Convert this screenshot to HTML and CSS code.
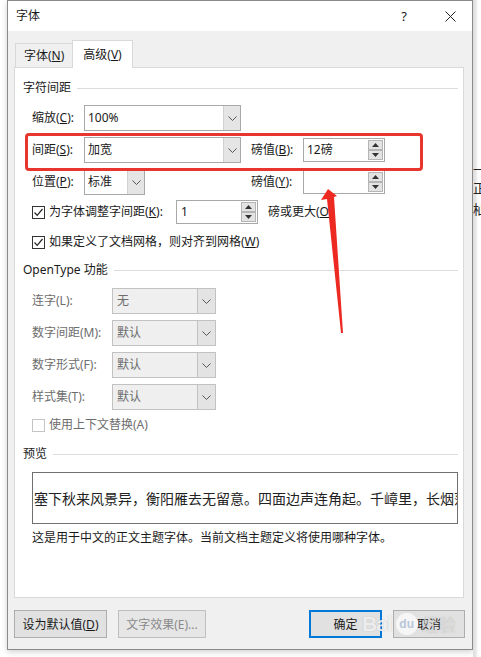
FILE: index.html
```html
<!DOCTYPE html>
<html lang="zh-CN">
<head>
<meta charset="utf-8">
<title>字体</title>
<link rel="stylesheet" href="styles.css">
</head>
<body>
<div class="screen">
  <div class="dialog">
    <div class="titlebar">
      <span class="title">字体</span>
      <span class="help">?</span>
      <span class="close"><svg width="11" height="11" viewBox="0 0 11 11"><path d="M0.5 0.5L10.5 10.5M10.5 0.5L0.5 10.5" stroke="#222" stroke-width="1" fill="none"/></svg></span>
    </div>
    <div class="body">
      <div class="tabs">
        <div class="tab">字体(<u>N</u>)</div>
        <div class="tab active">高级(<u>V</u>)</div>
      </div>
      <div class="panel">
        <div class="group g1"><span>字符间距</span></div>

        <div class="row r1">
          <span class="lbl">缩放(<u>C</u>):</span>
          <div class="combo"><span class="val">100%</span><span class="btn"><svg width="9" height="5" viewBox="0 0 9 5"><polyline points="0.5,0.5 4.5,4.5 8.5,0.5" fill="none" stroke="#555" stroke-width="1"/></svg></span></div>
        </div>

        <div class="row r2">
          <span class="lbl">间距(<u>S</u>):</span>
          <div class="combo"><span class="val">加宽</span><span class="btn"><svg width="9" height="5" viewBox="0 0 9 5"><polyline points="0.5,0.5 4.5,4.5 8.5,0.5" fill="none" stroke="#555" stroke-width="1"/></svg></span></div>
          <span></span>
          <span class="lbl">磅值(<u>B</u>):</span>
          <div class="spin"><span class="val">12磅</span><span class="arrows"><span><svg width="7" height="4" viewBox="0 0 7 4"><polygon points="3.5,0 7,4 0,4" fill="#333"/></svg></span><span><svg width="7" height="4" viewBox="0 0 7 4"><polygon points="0,0 7,0 3.5,4" fill="#333"/></svg></span></span></div>
        </div>

        <div class="row r3">
          <span class="lbl">位置(<u>P</u>):</span>
          <div class="combo short"><span class="val">标准</span><span class="btn"><svg width="9" height="5" viewBox="0 0 9 5"><polyline points="0.5,0.5 4.5,4.5 8.5,0.5" fill="none" stroke="#555" stroke-width="1"/></svg></span></div>
          <span></span>
          <span class="lbl">磅值(<u>Y</u>):</span>
          <div class="spin"><span class="val"></span><span class="arrows"><span><svg width="7" height="4" viewBox="0 0 7 4"><polygon points="3.5,0 7,4 0,4" fill="#333"/></svg></span><span><svg width="7" height="4" viewBox="0 0 7 4"><polygon points="0,0 7,0 3.5,4" fill="#333"/></svg></span></span></div>
        </div>

        <div class="checkrow c1">
          <span class="check"><svg width="11" height="11" viewBox="0 0 11 11"><polyline points="1.5,5.5 4.2,8.3 9.5,2" fill="none" stroke="#222" stroke-width="1.2"/></svg></span>
          <span class="ctext kern">为字体调整字间距(<u>K</u>):</span>
          <div class="spin"><span class="val v1">1</span><span class="arrows"><span><svg width="7" height="4" viewBox="0 0 7 4"><polygon points="3.5,0 7,4 0,4" fill="#333"/></svg></span><span><svg width="7" height="4" viewBox="0 0 7 4"><polygon points="0,0 7,0 3.5,4" fill="#333"/></svg></span></span></div>
          <span class="after">磅或更大(<u>O</u>)</span>
        </div>

        <div class="checkrow c2">
          <span class="check"><svg width="11" height="11" viewBox="0 0 11 11"><polyline points="1.5,5.5 4.2,8.3 9.5,2" fill="none" stroke="#222" stroke-width="1.2"/></svg></span>
          <span class="ctext">如果定义了文档网格，则对齐到网格(<u>W</u>)</span>
        </div>

        <div class="group g2"><span>OpenType 功能</span></div>

        <div class="otrow o1">
          <span class="lbl">连字(L):</span>
          <div class="combo dis"><span class="val">无</span><span class="btn"><svg width="9" height="5" viewBox="0 0 9 5"><polyline points="0.5,0.5 4.5,4.5 8.5,0.5" fill="none" stroke="#555" stroke-width="1"/></svg></span></div>
        </div>
        <div class="otrow">
          <span class="lbl">数字间距(M):</span>
          <div class="combo dis"><span class="val">默认</span><span class="btn"><svg width="9" height="5" viewBox="0 0 9 5"><polyline points="0.5,0.5 4.5,4.5 8.5,0.5" fill="none" stroke="#555" stroke-width="1"/></svg></span></div>
        </div>
        <div class="otrow">
          <span class="lbl">数字形式(F):</span>
          <div class="combo dis"><span class="val">默认</span><span class="btn"><svg width="9" height="5" viewBox="0 0 9 5"><polyline points="0.5,0.5 4.5,4.5 8.5,0.5" fill="none" stroke="#555" stroke-width="1"/></svg></span></div>
        </div>
        <div class="otrow">
          <span class="lbl">样式集(T):</span>
          <div class="combo dis"><span class="val">默认</span><span class="btn"><svg width="9" height="5" viewBox="0 0 9 5"><polyline points="0.5,0.5 4.5,4.5 8.5,0.5" fill="none" stroke="#555" stroke-width="1"/></svg></span></div>
        </div>

        <div class="checkrow c3">
          <span class="check off"></span>
          <span class="ctext grey">使用上下文替换(A)</span>
        </div>

        <div class="group g3"><span>预览</span></div>
        <div class="preview"><span>塞下秋来风景异，衡阳雁去无留意。四面边声连角起。千嶂里，长烟落日孤城闭。</span></div>
        <div class="desc">这是用于中文的正文主题字体。当前文档主题定义将使用哪种字体。</div>
      </div>

      <div class="buttons">
        <span class="b b1">设为默认值(<u>D</u>)</span>
        <span class="b b2">文字效果(E)...</span>
        <span class="b b3">确定</span>
        <span class="b b4">取消</span>
      </div>
    </div>
  </div>
  <div class="behind">
    <span class="f1">一</span>
    <span class="f2">正</span>
    <span class="f3">杣</span>
  </div>
</div>

<div class="redbox"></div>
<svg class="arrow" width="481" height="657" viewBox="0 0 481 657">
  <polygon points="328,189 337,196 334,197 343,333 341,333 327,199 321,200" fill="#ec2a22"/>
</svg>
<div class="watermark"><span class="wm-bai">Bai</span><span class="wm-du">du</span><span class="wm-jy">经验</span></div>
</body>
</html>
```
FILE: styles.css
```css
* { box-sizing: border-box; }
html, body { margin: 0; padding: 0; }
body {
  width: 481px;
  height: 657px;
  overflow: hidden;
  position: relative;
  background: #fff;
  font-family: "Noto Sans", "Noto Sans CJK SC", sans-serif;
  font-size: 12px;
  color: #1a1a1a;
}
u { text-decoration: underline; text-underline-offset: 1px; }

.screen { display: flex; height: 657px; }

.dialog {
  flex: none;
  margin-left: 7px;
  width: 466px;
  height: 650px;
  border: 1px solid #8a8a8a;
  background: #f0f0f0;
  box-shadow: 0 2px 6px rgba(0,0,0,0.18);
  display: flex;
  flex-direction: column;
}

.titlebar {
  height: 30px;
  flex: none;
  background: #fff;
  display: flex;
  align-items: center;
  padding-left: 8px;
  padding-right: 16px;
}
.title { flex: 1; font-size: 12px; line-height: 16px; }
.help { font-size: 13px; line-height: 16px; margin-right: 38px; }
.close { width: 11px; height: 11px; display: flex; }

.body { flex: 1; padding-top: 9px; display: flex; flex-direction: column; }

.tabs { display: flex; align-items: flex-end; height: 27px; margin-left: 7px; flex: none; }
.tab {
  height: 24px;
  width: 57px;
  border: 1px solid #d9d9d9;
  border-bottom: none;
  border-right: none;
  padding-left: 8px;
  line-height: 24px;
}
.tab.active {
  height: 28px;
  width: 61px;
  background: #fff;
  border-right: 1px solid #d9d9d9;
  padding-left: 0;
  text-align: center;
  line-height: 28px;
  margin-bottom: -1px;
  position: relative;
  z-index: 1;
}

.panel {
  flex: none;
  margin-left: 6px;
  width: 450px;
  height: 531px;
  background: #fff;
  border: 1px solid #d9d9d9;
  padding: 0 5px 0 8px;
}

.group { display: flex; align-items: center; height: 16px; line-height: 16px; }
.group::after { content: ""; flex: 1; height: 1px; background: #dcdcdc; margin-left: 6px; }
.g1 { margin-top: 12px; }
.g2 { margin-top: 10px; }
.g3 { margin-top: 12px; }

.lbl { line-height: 16px; white-space: nowrap; }

.row {
  display: grid;
  grid-template-columns: 52px 157px 10px 52px 82px;
  align-items: center;
  height: 26px;
  margin-left: 9px;
  margin-top: 6px;
}
.row.r1 { margin-top: 9px; }

.combo {
  height: 26px;
  border: 1px solid #a8a8a8;
  background: #fff;
  display: flex;
}
.combo.short { width: 61px; }
.combo .val { flex: 1; padding-left: 3px; line-height: 24px; white-space: nowrap; }
.combo .btn {
  width: 17px;
  background: #e5e5e5;
  border-left: 1px solid #d0d0d0;
  display: flex;
  align-items: center;
  justify-content: center;
}
.combo.dis { width: 104px; background: #efefef; border-color: #c2c2c2; color: #6d6d6d; }
.combo.dis .val { padding-left: 4px; }
.combo.dis .btn { width: 18px; background: #e3e3e3; border-left: 1px solid #c2c2c2; }

.spin {
  width: 82px;
  height: 24px;
  border: 1px solid #a8a8a8;
  background: #fff;
  display: flex;
}
.spin .val { flex: 1; padding-left: 3px; line-height: 22px; }
.spin .val.v1 { padding-left: 4px; }
.spin .arrows { width: 16px; display: flex; flex-direction: column; padding: 1px 1px 1px 0; }
.spin .arrows span {
  flex: 1;
  background: #e3e3e3;
  border: 1px solid #b5b5b5;
  display: flex;
  align-items: center;
  justify-content: center;
}

.checkrow { display: flex; align-items: center; margin-left: 9px; }
.c1 { height: 24px; margin-top: 5px; }
.c2 { height: 20px; margin-top: 8px; }
.c3 { height: 18px; margin-top: 6px; }
.check {
  flex: none;
  width: 13px;
  height: 13px;
  border: 1px solid #333;
  background: #fff;
  display: flex;
  align-items: center;
  justify-content: center;
  margin-top: 1px;
}
.check.off { border-color: #c4c4c4; }
.ctext { margin-left: 4px; line-height: 16px; white-space: nowrap; }
.ctext.kern { width: 127px; }
.ctext.grey { color: #6d6d6d; }
.after { margin-left: 10px; line-height: 16px; white-space: nowrap; }

.otrow {
  display: grid;
  grid-template-columns: 80px 104px;
  align-items: center;
  height: 26px;
  margin-left: 9px;
  margin-top: 6px;
  color: #6d6d6d;
}
.otrow.o1 { margin-top: 10px; }

.preview {
  margin: 10px 0 0 9px;
  height: 52px;
  border: 1px solid #707070;
  overflow: hidden;
  white-space: nowrap;
  display: flex;
  align-items: center;
  padding-left: 1px;
  font-size: 14px;
  color: #222;
  font-family: "Noto Sans CJK SC", sans-serif;
}
.desc { margin: 6px 0 0 9px; line-height: 16px; white-space: nowrap; }

.buttons { display: flex; margin: 12px 7px 0 6px; height: 28px; flex: none; }
.b {
  height: 28px;
  border: 1px solid #adadad;
  background: #e1e1e1;
  display: flex;
  align-items: center;
  justify-content: center;
  white-space: nowrap;
}
.b1 { width: 93px; }
.b2 { width: 88px; margin-left: 11px; color: #8a8a8a; border-color: #bfbfbf; background: #e6e6e6; }
.b3 { width: 73px; margin-left: auto; border: 2px solid #0078d7; }
.b4 { width: 72px; margin-left: 11px; }

.behind {
  flex: 1;
  overflow: hidden;
  display: flex;
  flex-direction: column;
  background: linear-gradient(to right, #dcdcdc 0, #e8e8e8 3px, #fdfdfd 5px, #fff 8px);
  font-family: "Noto Sans CJK SC", sans-serif;
  font-size: 13px;
  line-height: 16px;
  color: #222;
}
.behind span { white-space: nowrap; }
.f1 { margin-top: 161px; }
.f2 { margin-top: 3px; }
.f3 { margin-top: 5px; }

.redbox {
  position: absolute;
  left: 25px;
  top: 133px;
  width: 398px;
  height: 38px;
  border: 3px solid #e8352d;
  border-radius: 4px;
  pointer-events: none;
}
.arrow { position: absolute; left: 0; top: 0; pointer-events: none; }

.watermark {
  position: absolute;
  left: 362px;
  top: 611px;
  display: flex;
  align-items: center;
  pointer-events: none;
  color: rgba(255,255,255,0.8);
  text-shadow: 0 0 1px rgba(120,120,120,0.5);
  font-family: "Liberation Sans", sans-serif;
}
.wm-bai { font-size: 21px; font-weight: bold; letter-spacing: -1px; }
.wm-du {
  margin-left: 4px;
  width: 22px;
  height: 22px;
  border-radius: 50%;
  background: rgba(255,255,255,0.7);
  color: #b9c6d6;
  font-size: 12px;
  font-weight: bold;
  display: flex;
  align-items: center;
  justify-content: center;
  text-shadow: none;
}
.wm-jy { margin-left: 4px; font-size: 17px; font-family: "Noto Sans CJK SC", sans-serif; color: rgba(255,255,255,0.5); }
```
